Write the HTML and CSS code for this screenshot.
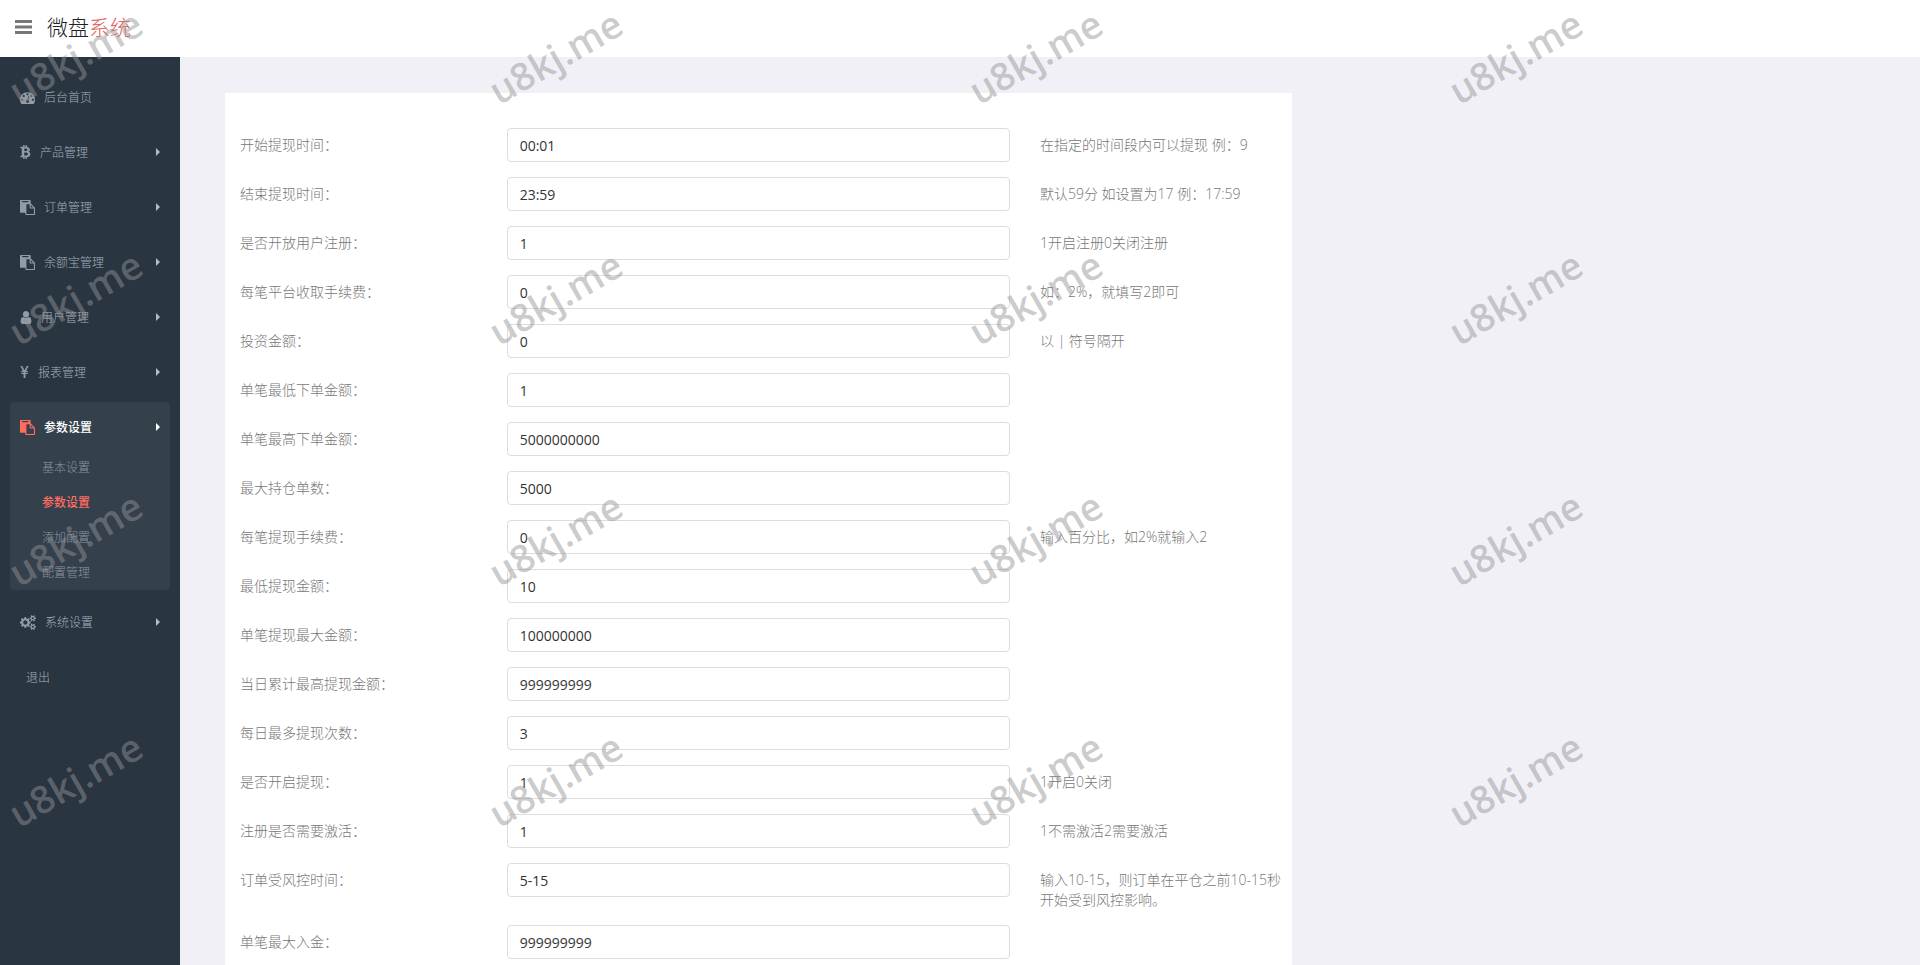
FILE: index.html
```html
<!DOCTYPE html>
<html lang="zh-CN">
<head>
<meta charset="utf-8">
<title>微盘系统</title>
<link rel="stylesheet" href="styles.css">
</head>
<body>
<svg class="sprite" aria-hidden="true">
  <symbol id="i-dash" viewBox="0 0 1792 1792"><path d="M384 1152q0-53-37.500-90.500t-90.500-37.500-90.500 37.500-37.500 90.500 37.500 90.500 90.500 37.500 90.500-37.500 37.500-90.500zm192-448q0-53-37.500-90.500t-90.500-37.500-90.500 37.500-37.500 90.500 37.500 90.500 90.500 37.500 90.500-37.500 37.500-90.500zm428 481l101-382q6-26-7.500-48.500t-38.500-29.500-48 6.500-30 39.500l-101 382q-60 5-107 43.500t-63 98.500q-20 77 20 146t117 89 146-20 89-117q16-60-6-117t-72-91zm660-33q0-53-37.500-90.500t-90.500-37.500-90.500 37.500-37.500 90.500 37.500 90.500 90.500 37.500 90.500-37.500 37.500-90.500zm-640-640q0-53-37.500-90.500t-90.500-37.500-90.500 37.500-37.500 90.500 37.500 90.500 90.500 37.500 90.500-37.500 37.500-90.500zm448 192q0-53-37.500-90.500t-90.500-37.500-90.500 37.500-37.500 90.500 37.500 90.500 90.500 37.500 90.500-37.500 37.500-90.500zm320 448q0 261-141 483-19 29-54 29h-1402q-35 0-54-29-141-221-141-483 0-182 71-348t191-286 286-191 348-71 348 71 286 191 191 286 71 348z"/></symbol>
  <symbol id="i-paste" viewBox="0 0 1792 1792"><path d="M768 1664h896v-640h-416q-40 0-68-28t-28-68v-416h-384v1152zm256-1440v-64q0-13-9.500-22.500t-22.500-9.500h-704q-13 0-22.500 9.500t-9.500 22.500v64q0 13 9.500 22.500t22.500 9.500h704q13 0 22.500-9.500t9.500-22.500zm256 672h299l-299-299v299zm512 128v672q0 40-28 68t-68 28h-960q-40 0-68-28t-28-68v-160h-544q-40 0-68-28t-28-68v-1344q0-40 28-68t68-28h1088q40 0 68 28t28 68v328q21 13 36 28l408 408q28 28 48 76t20 88z"/></symbol>
  <symbol id="i-user" viewBox="192 0 1408 1792"><path d="M1536 1399q0 109-62.500 187t-150.500 78h-854q-88 0-150.500-78t-62.500-187q0-85 8.500-160.500t31.500-152 58.500-131 94-89 134.500-34.500q131 128 313 128t313-128q76 0 134.500 34.500t94 89 58.500 131 31.500 152 8.500 160.500zm-256-887q0 159-112.500 271.500t-271.500 112.500-271.500-112.500-112.500-271.500 112.500-271.500 271.500-112.500 271.500 112.500 112.500 271.500z"/></symbol>
  <symbol id="i-btc" viewBox="0 0 11 15"><path fill-rule="evenodd" d="M0 2h3V0h1.500v2h1V0H7v2.200c2 .3 3.200 1.300 3.200 2.800 0 1-.5 1.800-1.500 2.200C10 7.600 10.700 8.500 10.700 9.800c0 2-1.400 3-3.700 3.200V15H5.500v-2h-1v2H3v-2H0l.3-1.600h1.200V3.600H0zM4.200 3.700v2.700h1.600c2.400 0 2.400-2.700 0-2.700zM4.200 8v3.300h2c2.600 0 2.600-3.300 0-3.300z"/></symbol>
  <symbol id="i-yen" viewBox="0 0 9 13"><path d="M0 0h2l2.500 4.600L7 0h2L6.200 5.200H8v1.200H5.500v1H8v1.200H5.500V13h-2V8.600H1V7.400h2.500v-1H1V5.200h1.800z"/></symbol>
  <symbol id="i-cogs" viewBox="0 0 1920 1792"><path d="M896 896q0-106-75-181t-181-75-181 75-75 181 75 181 181 75 181-75 75-181zm768 512q0-52-38-90t-90-38-90 38-38 90q0 53 37.500 90.500t90.500 37.500 90.500-37.500 37.500-90.500zm0-1024q0-52-38-90t-90-38-90 38-38 90q0 53 37.500 90.500t90.500 37.500 90.500-37.500 37.500-90.500zm-384 421v185q0 10-7 19.500t-16 10.500l-155 24q-11 35-32 76 34 48 90 115 7 11 7 20 0 12-7 19-23 30-82.500 89.500t-78.500 59.500q-11 0-21-7l-115-90q-37 19-77 31-11 108-23 155-7 24-30 24h-186q-11 0-20-7.500t-10-17.500l-23-153q-34-10-75-31l-118 89q-7 7-20 7-11 0-21-8-144-133-144-160 0-9 7-19 10-14 41-53t47-61q-23-44-35-82l-152-24q-10-1-17-9.500t-7-19.500v-185q0-10 7-19.500t16-10.500l155-24q11-35 32-76-34-48-90-115-7-11-7-20 0-12 7-20 22-30 82-89t79-59q11 0 21 7l115 90q34-18 77-32 11-108 23-154 7-24 30-24h186q11 0 20 7.500t10 17.500l23 153q34 10 75 31l118-89q8-7 20-7 11 0 21 8 144 133 144 160 0 8-7 19-12 16-42 54t-45 60q23 48 34 82l152 23q10 2 17 10.500t7 19.500zm640 533v140q0 16-149 31-12 27-30 52 51 113 51 138 0 4-4 7-122 71-124 71-8 0-46-47t-52-68q-20 2-30 2t-30-2q-14 21-52 68t-46 47q-2 0-124-71-4-3-4-7 0-25 51-138-18-25-30-52-149-15-149-31v-140q0-16 149-31 13-29 30-52-51-113-51-138 0-4 4-7 4-2 35-20t59-34 30-16q8 0 46 46.500t52 67.500q20-2 30-2t30 2q51-71 92-112l6-2q4 0 124 70 4 3 4 7 0 25-51 138 17 23 30 52 149 15 149 31zm0-1024v140q0 16-149 31-12 27-30 52 51 113 51 138 0 4-4 7-122 71-124 71-8 0-46-47t-52-68q-20 2-30 2t-30-2q-14 21-52 68t-46 47q-2 0-124-71-4-3-4-7 0-25 51-138-18-25-30-52-149-15-149-31v-140q0-16 149-31 13-29 30-52-51-113-51-138 0-4 4-7 4-2 35-20t59-34 30-16q8 0 46 46.500t52 67.500q20-2 30-2t30 2q51-71 92-112l6-2q4 0 124 70 4 3 4 7 0 25-51 138 17 23 30 52 149 15 149 31z"/></symbol>
  <symbol id="i-caret" viewBox="0 0 4 8"><path d="M0 0l4 4-4 4z"/></symbol>
</svg>

<header class="topbar">
  <button class="menu-toggle" type="button" aria-label="菜单">
    <svg viewBox="0 0 17 14"><path d="M0 0h17v3H0zM0 5.500h17v3H0zM0 11h17v3H0z"/></svg>
  </button>
  <a class="brand" href="#">微盘<span class="brand-accent">系统</span></a>
</header>

<div class="layout">
  <nav class="sidebar">
    <ul class="menu">
      <li class="menu-item"><a class="menu-link" href="#"><svg class="icon"><use href="#i-dash"/></svg><span>后台首页</span></a></li>
      <li class="menu-item"><a class="menu-link" href="#"><svg class="icon icon-btc"><use href="#i-btc"/></svg><span>产品管理</span><svg class="caret"><use href="#i-caret"/></svg></a></li>
      <li class="menu-item"><a class="menu-link" href="#"><svg class="icon"><use href="#i-paste"/></svg><span>订单管理</span><svg class="caret"><use href="#i-caret"/></svg></a></li>
      <li class="menu-item"><a class="menu-link" href="#"><svg class="icon"><use href="#i-paste"/></svg><span>余额宝管理</span><svg class="caret"><use href="#i-caret"/></svg></a></li>
      <li class="menu-item"><a class="menu-link" href="#"><svg class="icon icon-user"><use href="#i-user"/></svg><span>用户管理</span><svg class="caret"><use href="#i-caret"/></svg></a></li>
      <li class="menu-item"><a class="menu-link" href="#"><svg class="icon icon-yen"><use href="#i-yen"/></svg><span>报表管理</span><svg class="caret"><use href="#i-caret"/></svg></a></li>
      <li class="menu-item open"><a class="menu-link" href="#"><svg class="icon"><use href="#i-paste"/></svg><span>参数设置</span><svg class="caret"><use href="#i-caret"/></svg></a>
        <ul class="submenu">
          <li><a class="sub-link" href="#">基本设置</a></li>
          <li><a class="sub-link current" href="#">参数设置</a></li>
          <li><a class="sub-link" href="#">添加配置</a></li>
          <li><a class="sub-link" href="#">配置管理</a></li>
        </ul>
      </li>
      <li class="menu-item"><a class="menu-link" href="#"><svg class="icon icon-cogs"><use href="#i-cogs"/></svg><span>系统设置</span><svg class="caret"><use href="#i-caret"/></svg></a></li>
      <li class="menu-item"><a class="menu-link logout" href="#"><span>退出</span></a></li>
    </ul>
  </nav>

  <main class="content">
    <form class="panel">
      <div class="row"><label for="f1">开始提现时间：</label><input id="f1" type="text" value="00:01"><p class="hint">在指定的时间段内可以提现 例：9</p></div>
      <div class="row"><label for="f2">结束提现时间：</label><input id="f2" type="text" value="23:59"><p class="hint">默认59分 如设置为17 例：17:59</p></div>
      <div class="row"><label for="f3">是否开放用户注册：</label><input id="f3" type="text" value="1"><p class="hint">1开启注册0关闭注册</p></div>
      <div class="row"><label for="f4">每笔平台收取手续费：</label><input id="f4" type="text" value="0"><p class="hint">如：2%，就填写2即可</p></div>
      <div class="row"><label for="f5">投资金额：</label><input id="f5" type="text" value="0"><p class="hint">以 | 符号隔开</p></div>
      <div class="row"><label for="f6">单笔最低下单金额：</label><input id="f6" type="text" value="1"></div>
      <div class="row"><label for="f7">单笔最高下单金额：</label><input id="f7" type="text" value="5000000000"></div>
      <div class="row"><label for="f8">最大持仓单数：</label><input id="f8" type="text" value="5000"></div>
      <div class="row"><label for="f9">每笔提现手续费：</label><input id="f9" type="text" value="0"><p class="hint">输入百分比，如2%就输入2</p></div>
      <div class="row"><label for="f10">最低提现金额：</label><input id="f10" type="text" value="10"></div>
      <div class="row"><label for="f11">单笔提现最大金额：</label><input id="f11" type="text" value="100000000"></div>
      <div class="row"><label for="f12">当日累计最高提现金额：</label><input id="f12" type="text" value="999999999"></div>
      <div class="row"><label for="f13">每日最多提现次数：</label><input id="f13" type="text" value="3"></div>
      <div class="row"><label for="f14">是否开启提现：</label><input id="f14" type="text" value="1"><p class="hint">1开启0关闭</p></div>
      <div class="row"><label for="f15">注册是否需要激活：</label><input id="f15" type="text" value="1"><p class="hint">1不需激活2需要激活</p></div>
      <div class="row"><label for="f16">订单受风控时间：</label><input id="f16" type="text" value="5-15"><p class="hint">输入10-15，则订单在平仓之前10-15秒开始受到风控影响。</p></div>
      <div class="row"><label for="f17">单笔最大入金：</label><input id="f17" type="text" value="999999999"></div>
    </form>
  </main>
</div>

<div class="watermark" aria-hidden="true">
  <span>u8kj.me</span><span>u8kj.me</span><span>u8kj.me</span><span>u8kj.me</span>
  <span>u8kj.me</span><span>u8kj.me</span><span>u8kj.me</span><span>u8kj.me</span>
  <span>u8kj.me</span><span>u8kj.me</span><span>u8kj.me</span><span>u8kj.me</span>
  <span>u8kj.me</span><span>u8kj.me</span><span>u8kj.me</span><span>u8kj.me</span>
</div>
</body>
</html>
```

FILE: styles.css
```css
* { box-sizing: border-box; }

html, body { height: 100%; }

body {
  margin: 0;
  display: flex;
  flex-direction: column;
  overflow: hidden;
  background: #f1f0f6;
  color: #777;
  font: 300 14px/20px "Open Sans", "Noto Sans CJK SC", sans-serif;
}

ul { list-style: none; margin: 0; padding: 0; }
a { color: inherit; text-decoration: none; }
svg { fill: currentColor; }
.sprite { display: none; }

.topbar {
  flex: none;
  display: flex;
  align-items: center;
  gap: 15px;
  height: 57px;
  padding: 0 15px 4px;
  background: #fff;
}
.menu-toggle {
  padding: 0;
  border: 0;
  background: none;
  color: #777;
}
.menu-toggle svg { display: block; width: 17px; height: 14px; }
.brand { color: #222; font-size: 21px; line-height: 30px; }
.brand-accent { color: #e2605c; }

.layout { flex: 1; display: flex; min-height: 0; }

.sidebar {
  flex: none;
  width: 180px;
  padding: 15px 10px 0;
  background: #2a3542;
  color: #a6afb8;
  font-size: 12px;
}
.menu-item { margin-bottom: 7px; border-radius: 4px; }
.menu-link {
  display: flex;
  align-items: center;
  height: 48px;
  padding: 2px 10px 0;
  gap: 9px;
}
.menu-link span { padding-top: 2px; }
.icon { flex: none; width: 15px; height: 15px; color: #929ca6; }
.icon-btc { width: 11px; height: 14px; }
.icon-user { width: 12px; height: 15px; }
.icon-yen { width: 9px; height: 12px; }
.icon-cogs { width: 16px; height: 15px; }
.caret { width: 4px; height: 8px; margin-left: auto; color: #b4bcc4; }
.logout { padding-left: 16px; }

.open { background: #35404d; }
.open .menu-link { color: #fff; font-weight: 500; }
.open .icon { color: #ff6c60; }
.open .caret { color: #fff; }
.sub-link {
  display: block;
  padding-left: 32px;
  line-height: 35px;
  color: #8a95a1;
}
.sub-link.current { color: #ff6c60; font-weight: 500; }

.content {
  flex: 1;
  padding: 36px 95px 0 45px;
  overflow: hidden;
}
.panel {
  width: 66.667%;
  min-height: 100%;
  padding: 35px 0;
  background: #fff;
}
.row {
  display: grid;
  grid-template-columns: 3fr 6fr 3fr;
  align-items: start;
  margin-bottom: 15px;
}
.row label, .hint { margin: 0; padding: 7px 5px 0 15px; }
.row input {
  height: 34px;
  margin: 0 15px;
  padding: 6px 12px;
  border: 1px solid #dcdde2;
  border-radius: 4px;
  background: #fff;
  color: #333;
  font: 400 14px/20px "Open Sans", "Noto Sans CJK SC", sans-serif;
}

.watermark {
  position: absolute;
  inset: 0;
  display: grid;
  grid-template-columns: repeat(4, 1fr);
  grid-auto-rows: 241px;
  align-items: start;
  overflow: hidden;
  pointer-events: none;
  color: rgba(148, 148, 148, 0.49);
  font: 600 38px/40px "Open Sans", sans-serif;
}
.watermark span {
  width: 150px;
  margin-top: 36px;
  text-align: center;
  transform: rotate(-30deg);
}
```
